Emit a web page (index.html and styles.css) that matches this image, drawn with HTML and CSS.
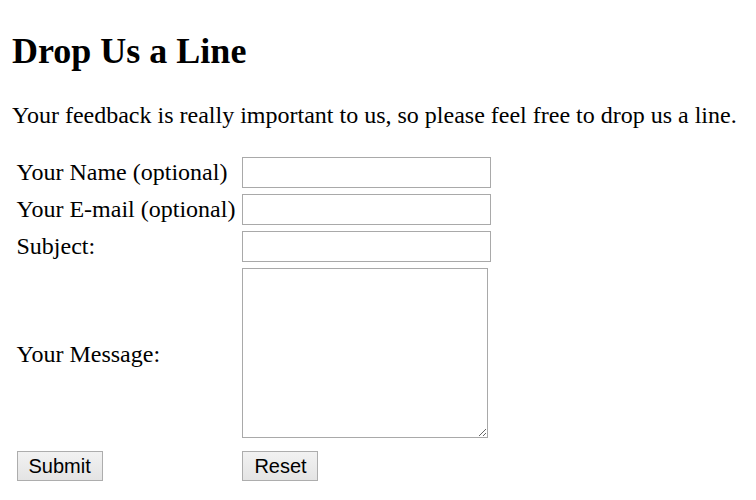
FILE: index.html
```html
<!DOCTYPE html>
<html>
<head>
<meta charset="utf-8">
<title>Drop Us a Line</title>
<link rel="stylesheet" href="styles.css">
</head>
<body>
<h2 class="title">Drop Us a Line</h2>
<p class="intro">Your feedback is really important to us, so please feel free to drop us a line.</p>
<form class="contact">
<table class="form-table">
<tr>
<td class="label">Your Name (optional)</td>
<td><input class="field" type="text" name="name"></td>
</tr>
<tr>
<td class="label">Your E-mail (optional)</td>
<td><input class="field" type="text" name="email"></td>
</tr>
<tr>
<td class="label">Subject:</td>
<td><input class="field" type="text" name="subject"></td>
</tr>
<tr>
<td class="label label-message">Your Message:</td>
<td><textarea class="message" name="message"></textarea></td>
</tr>
<tr class="actions">
<td><button class="btn btn-submit" type="button">Submit</button></td>
<td><button class="btn btn-reset" type="button">Reset</button></td>
</tr>
</table>
</form>
</body>
</html>
```
FILE: styles.css
```css
html, body {
  background: #ffffff;
}
body {
  margin: 0 12px 12px 12px;
  padding: 0;
  font-family: "Liberation Serif", "Times New Roman", serif;
  font-size: 24px;
  color: #000000;
}
.title {
  font-size: 36px;
  font-weight: bold;
  margin: 30px 0;
}
.intro {
  margin: 24px 0 23px 0;
}
.contact {
  margin: 0;
}
.form-table {
  border-collapse: separate;
  border-spacing: 3px;
}
.form-table td {
  padding: 1.5px;
  vertical-align: middle;
}
.label {
  white-space: nowrap;
}
.form-table .label-message {
  padding-top: 5px;
}
.field {
  display: block;
  box-sizing: border-box;
  width: 249px;
  height: 31px;
  margin: 0 0 0 1px;
  border: 1px solid #a9a9a9;
  padding: 2px 3px;
  font-family: "Liberation Sans", Arial, sans-serif;
  font-size: 20px;
  background: #ffffff;
}
.message {
  display: block;
  box-sizing: border-box;
  width: 246px;
  height: 170px;
  margin: 0 0 0 1px;
  border: 1px solid #a9a9a9;
  padding: 3px;
  font-family: "Liberation Mono", monospace;
  font-size: 20px;
  background: #ffffff;
}
.form-table .actions td {
  padding-top: 8.5px;
}
.btn {
  display: block;
  box-sizing: border-box;
  height: 30px;
  margin: 0;
  padding: 0 11px;
  border: 1px solid #adadad;
  border-radius: 0;
  background: linear-gradient(#f2f2f2, #e4e4e4);
  font-family: "Liberation Sans", Arial, sans-serif;
  font-size: 20px;
  line-height: 28px;
  color: #000000;
}
.btn-submit {
  width: 86px;
}
.btn-reset {
  width: 76px;
  margin-left: 1px;
}
```
